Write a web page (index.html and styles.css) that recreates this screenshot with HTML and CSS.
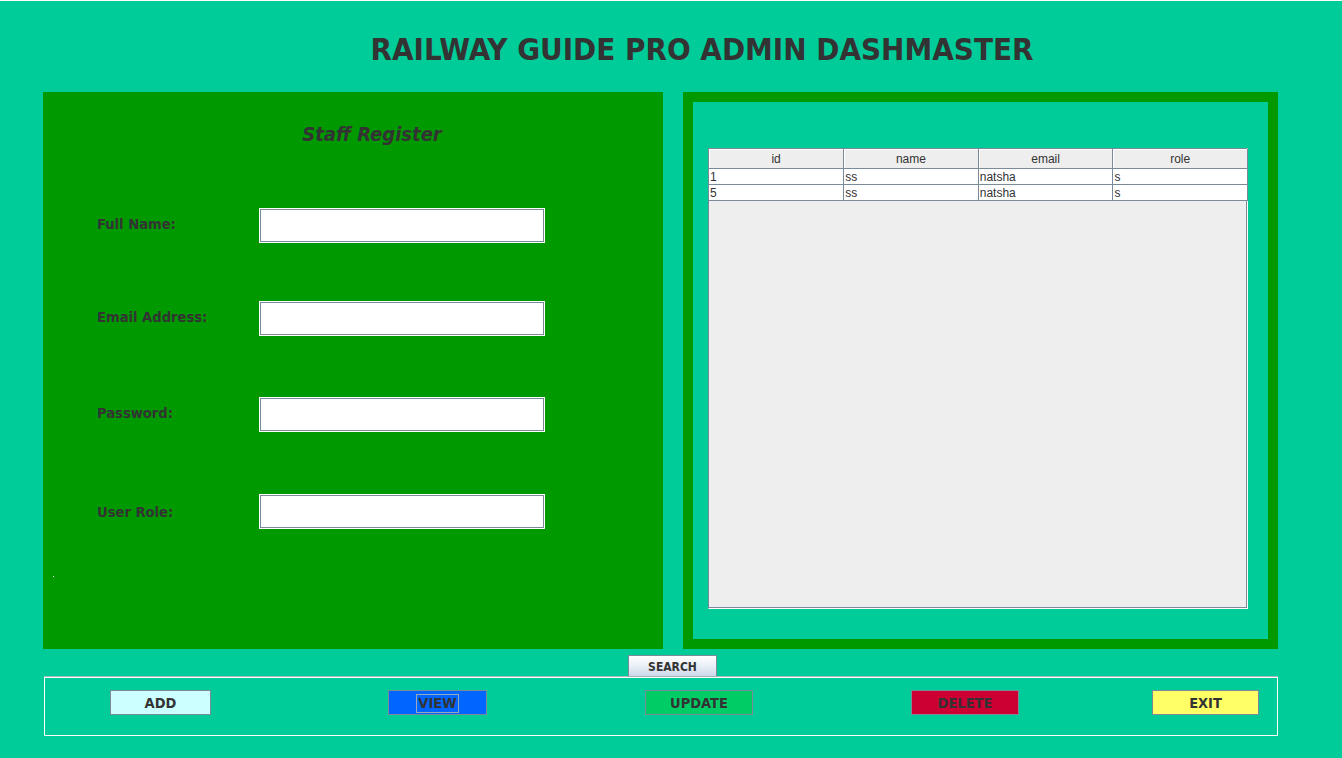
FILE: index.html
```html
<!DOCTYPE html>
<html>
<head>
<meta charset="utf-8">
<link rel="stylesheet" href="styles.css">
</head>
<body>
<div class="page">
  <h1 class="title">RAILWAY GUIDE PRO ADMIN DASHMASTER</h1>
  <div class="main">
    <div class="left-panel">
      <h2 class="form-title">Staff Register</h2>
      <div class="form">
        <div class="row r1"><label class="lbl">Full Name:</label><div class="field"></div></div>
        <div class="row r2"><label class="lbl">Email Address:</label><div class="field"></div></div>
        <div class="row r3"><label class="lbl">Password:</label><div class="field"></div></div>
        <div class="row r4"><label class="lbl">User Role:</label><div class="field"></div></div>
      </div>
      <div class="dot"></div>
    </div>
    <div class="right-panel">
      <div class="table-wrap">
        <table class="grid">
          <thead>
            <tr><th>id</th><th>name</th><th>email</th><th>role</th></tr>
          </thead>
          <tbody>
            <tr><td>1</td><td>ss</td><td>natsha</td><td>s</td></tr>
            <tr><td>5</td><td>ss</td><td>natsha</td><td>s</td></tr>
          </tbody>
        </table>
      </div>
    </div>
  </div>
  <div class="search-row"><button class="search">SEARCH</button></div>
  <div class="actions">
    <button class="btn add">ADD</button>
    <button class="btn view"><span class="focus">VIEW</span></button>
    <button class="btn update">UPDATE</button>
    <button class="btn delete">DELETE</button>
    <button class="btn exit">EXIT</button>
  </div>
</div>
</body>
</html>
```
FILE: styles.css
```css
html, body {
  margin: 0;
  padding: 0;
}
body {
  background: #00cc99;
  width: 1342px;
  height: 758px;
  overflow: hidden;
  font-family: "DejaVu Sans Condensed", "DejaVu Sans", sans-serif;
  color: #333333;
}
.page {
  border-top: 1px solid #ffffff;
  height: 757px;
}
.title {
  margin: 0;
  height: 91px;
  box-sizing: border-box;
  padding-top: 29px;
  text-align: center;
  font-size: 31px;
  font-weight: bold;
  line-height: 38px;
  color: #333333;
  padding-left: 62px;
}
.main {
  display: flex;
  margin-left: 43px;
  gap: 20px;
  height: 557px;
}
.left-panel {
  width: 620px;
  background: #009900;
  position: relative;
}
.form-title {
  margin: 0;
  padding-top: 30px;
  padding-left: 38px;
  text-align: center;
  font-size: 20px;
  font-style: italic;
  font-weight: bold;
  line-height: 24px;
  height: 24px;
}
.form {
  padding-top: 62px;
  padding-left: 54px;
}
.row {
  display: flex;
  align-items: center;
  height: 35px;
}
.r2 { margin-top: 58px; }
.r3 { margin-top: 61px; }
.r4 { margin-top: 62px; }
.r4 .lbl { margin-top: 0; }
.lbl {
  width: 162px;
  font-size: 14.6px;
  font-weight: bold;
  line-height: 18px;
  margin-top: -3px;
}
.field {
  width: 286px;
  height: 35px;
  box-sizing: border-box;
  background: #ffffff;
  border: 1px solid #ffffff;
  box-shadow: inset 1px 1px 0 #7a8a99, inset -1px -1px 0 #7a8a99;
}
.dot {
  position: absolute;
  left: 10px;
  top: 484px;
  width: 1px;
  height: 1px;
  background: #ffffff;
}
.right-panel {
  width: 595px;
  box-sizing: border-box;
  border: 10px solid #009900;
  background: #00cc99;
  padding: 46px 20px 30px 15px;
}
.table-wrap {
  width: 540px;
  height: 461px;
  box-sizing: border-box;
  background: #eeeeee;
  border: 1px solid #7a8a99;
  border-right-color: #ffffff;
  border-bottom-color: #ffffff;
  box-shadow: inset -1px -1px 0 #7a8a99;
}
.grid {
  width: 539px;
  border-collapse: collapse;
  table-layout: fixed;
  font-family: "Liberation Sans", Arial, sans-serif;
  font-size: 12px;
  color: #333333;
}
.grid th {
  height: 18px;
  padding: 1px 0 0;
  font-weight: normal;
  background: #eeeeee;
  border-right: 1px solid #7a8a99;
  border-bottom: 1px solid #7a8a99;
  box-shadow: inset 1px 1px 0 #ffffff;
  text-align: center;
  line-height: 18px;
}
.grid td {
  height: 14px;
  padding: 1px 0 0 1px;
  background: #ffffff;
  border-right: 1px solid #7a8a99;
  border-bottom: 1px solid #7a8a99;
  line-height: 14px;
  text-align: left;
}
.search-row {
  padding-left: 628px;
  padding-top: 6px;
  height: 22px;
}
.search {
  display: block;
  width: 89px;
  height: 22px;
  box-sizing: border-box;
  border: 1px solid #7a8a99;
  border-bottom: none;
  background: linear-gradient(#ffffff, #e8eef6 50%, #c9d6e6);
  font-family: "DejaVu Sans Condensed", "DejaVu Sans", sans-serif;
  font-size: 12px;
  font-weight: bold;
  color: #333333;
  padding: 1px 0 0;
}
.actions {
  margin-left: 44px;
  width: 1234px;
  height: 59px;
  box-sizing: border-box;
  border: 1px solid #ffffff;
  box-shadow: 0 -1px 0 #aab4bd;
  display: flex;
  align-items: flex-start;
  padding-top: 12px;
}
.btn {
  height: 25px;
  box-sizing: border-box;
  border: 1px solid #7a8a99;
  font-family: "DejaVu Sans Condensed", "DejaVu Sans", sans-serif;
  font-size: 14.5px;
  font-weight: bold;
  color: #333333;
  padding: 0;
  line-height: 22px;
}
.add { width: 101px; margin-left: 65px; background: #ccffff; }
.view { width: 99px; margin-left: 177px; background: #0066ff; }
.update { width: 108px; margin-left: 158px; background: #00cc66; }
.delete { width: 108px; margin-left: 158px; background: #cc0033; }
.exit { width: 107px; margin-left: 133px; background: #ffff66; }
.focus {
  display: inline-block;
  border: 1px solid #9aa8b8;
  line-height: 17px;
  padding: 0 1px;
}
```
